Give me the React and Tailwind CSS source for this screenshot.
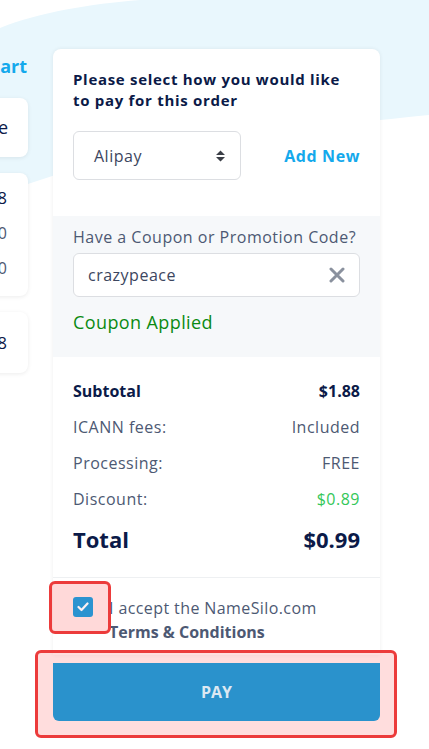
import React from 'react';

const navy = 'text-[#0b1a48]';
const muted = 'text-[#4d5973]';

function SideCards() {
    return (
        <div className="-ml-[62px] flex w-[90px] shrink-0 flex-col items-stretch pt-[52px]">
            <div className="h-[28px] pr-px text-right text-[18px] leading-[28px] font-bold text-[#14a9ec]">Cart</div>
            <div className="mt-[18px] flex h-[59px] items-center justify-end rounded-lg bg-white pr-[20px] text-[18px] shadow-[0_1px_4px_rgba(0,0,0,0.08)]">
                <span className={navy}>Name</span>
            </div>
            <div className="mt-[16px] flex h-[123px] flex-col items-end rounded-lg bg-white pt-[12px] pr-[21px] text-[17px] shadow-[0_1px_4px_rgba(0,0,0,0.08)]">
                <span className={`${navy} leading-[26px]`}>$1.88</span>
                <span className={`${muted} mt-[9px] text-[16px] leading-[26px]`}>$0.00</span>
                <span className={`${muted} mt-[9px] text-[16px] leading-[26px]`}>$0.00</span>
            </div>
            <div className="mt-[16px] flex h-[61px] items-center justify-end rounded-lg bg-white pr-[21px] text-[17px] shadow-[0_1px_4px_rgba(0,0,0,0.08)]">
                <span className={navy}>$1.88</span>
            </div>
        </div>
    );
}

function Row({ label, value, bold, valueClass }) {
    return (
        <div className="flex h-9 items-center justify-between text-[16px]">
            <span className={bold ? `${navy} font-bold` : `${muted} tracking-[0.5px]`}>{label}</span>
            <span className={valueClass || (bold ? `${navy} font-bold` : `${muted} tracking-[0.5px]`)}>{value}</span>
        </div>
    );
}

export default function App() {
    return (
        <div className="relative h-[749px] w-[429px] overflow-hidden bg-white font-['Open_Sans',sans-serif]">
            {/* background wave */}
            <svg className="absolute top-0 left-0" width="429" height="300" viewBox="0 0 429 300">
                <path d="M0 28 C40 12 90 4 140 0 L429 0 L429 115 C400 118 380 120 360 122 C250 135 140 150 70 170 C40 180 15 188 0 194 Z" fill="#e9f7fd" />
            </svg>

            <div className="relative flex gap-[25px]">
                <SideCards />

                <div className="mt-[49px] flex w-[327px] shrink-0 flex-col">
                    <div className="overflow-hidden rounded-t-lg bg-white shadow-[0_0_4px_rgba(0,0,0,0.07)]">
                        <div className="px-5 pt-5 pb-9">
                            <h2 className={`text-[15px] leading-[21px] font-bold tracking-[0.7px] ${navy}`}>
                                Please select how you would like to pay for this order
                            </h2>
                            <div className="mt-5 flex items-center justify-between">
                                <div className="flex h-[49px] w-[168px] items-center justify-between rounded-md border border-[#dcdee2] bg-white pr-[14px] pl-[20px]">
                                    <span className="text-[16px] tracking-[0.5px] text-[#3c4660]">Alipay</span>
                                    <svg width="11" height="14" viewBox="0 0 11 14">
                                        <path d="M1 6 L5.5 1.5 L10 6 Z M1 8 L5.5 12.5 L10 8 Z" fill="#3b3f47" />
                                    </svg>
                                </div>
                                <span className="text-[16px] font-bold tracking-[0.6px] text-[#14a9ec]">Add New</span>
                            </div>
                        </div>

                        <div className="bg-[#f6f8fa] px-5 pt-[9px] pb-[23px]">
                            <div className={`text-[16px] leading-6 tracking-[0.5px] ${muted}`}>Have a Coupon or Promotion Code?</div>
                            <div className="mt-1 flex h-[44px] items-center justify-between rounded-md border border-[#dcdee2] bg-white pr-[14px] pl-[14px]">
                                <span className="text-[16px] tracking-[0.5px] text-[#3c4660]">crazypeace</span>
                                <svg width="16" height="16" viewBox="0 0 16 16">
                                    <path d="M2 2 L14 14 M14 2 L2 14" stroke="#8a919e" strokeWidth="3" strokeLinecap="round" />
                                </svg>
                            </div>
                            <div className="mt-[13px] text-[18px] leading-6 tracking-[0.4px] text-[#0a8a12]">Coupon Applied</div>
                        </div>

                        <div className="border-b border-[#eef0f2] px-5 pt-4 pb-4">
                            <Row label="Subtotal" value="$1.88" bold />
                            <Row label="ICANN fees:" value="Included" />
                            <Row label="Processing:" value="FREE" />
                            <Row label="Discount:" value="$0.89" valueClass="tracking-[0.5px] text-[#34c759]" />
                            <div className="flex h-11 items-center justify-between">
                                <span className={`text-[22px] font-bold ${navy}`}>Total</span>
                                <span className={`text-[22px] font-bold ${navy}`}>$0.99</span>
                            </div>
                        </div>

                        <div className="flex items-start gap-4 px-5 pt-[18px] pb-[11px]">
                            <div className="relative z-20 mt-px flex h-5 w-5 shrink-0 items-center justify-center rounded-[3px] bg-[#2b93d0]">
                                <svg width="12" height="10" viewBox="0 0 12 10">
                                    <path d="M1.5 5 L4.5 8 L10.5 1.5" fill="none" stroke="#fdf0f2" strokeWidth="2.2" strokeLinecap="round" strokeLinejoin="round" />
                                </svg>
                            </div>
                            <p className={`text-[16px] leading-6 ${muted}`}>
                                <span className="tracking-[0.4px]">I accept the NameSilo.com</span> <span className="font-bold">Terms &amp; Conditions</span>
                            </p>
                        </div>
                    </div>

                    <button className="relative z-20 mt-2 h-[58px] rounded-b-md bg-[#2a92cc] text-[16px] font-bold text-[#dce8f2]">PAY</button>
                </div>
            </div>

            {/* highlight overlays */}
            <div className="absolute top-[581px] left-[49px] z-10 h-[53px] w-[62px] rounded-md border-[3px] border-[#ec3b3b] bg-[rgba(255,120,120,0.28)]" />
            <div className="absolute top-[650px] left-[35px] z-10 h-[88px] w-[362px] rounded-md border-[3px] border-[#ec3b3b] bg-[rgba(255,120,120,0.25)]" />
        </div>
    );
}
